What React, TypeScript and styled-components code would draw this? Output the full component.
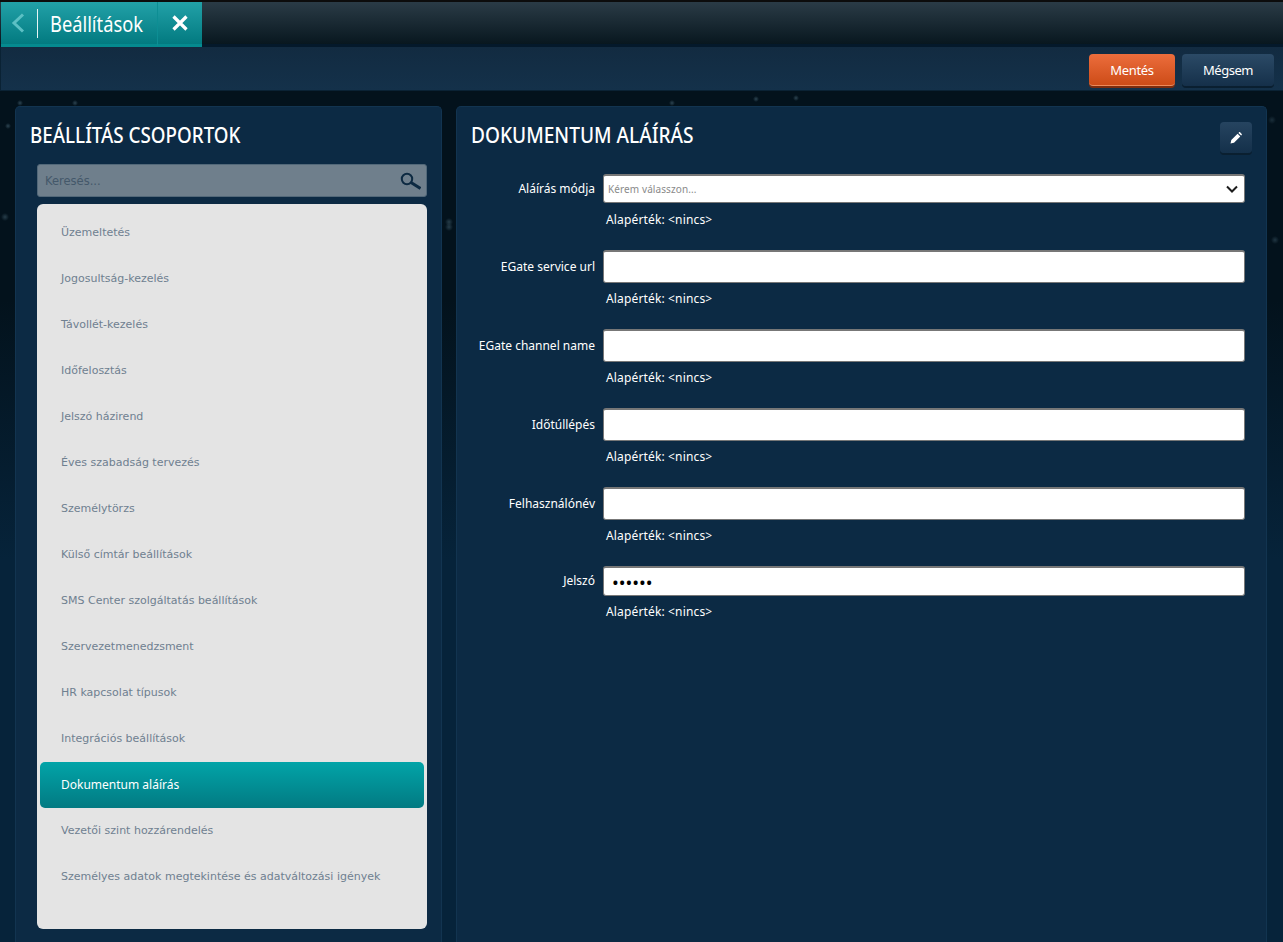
import React from 'react'
import styled, { createGlobalStyle } from 'styled-components'

const groups = [
  'Üzemeltetés',
  'Jogosultság-kezelés',
  'Távollét-kezelés',
  'Időfelosztás',
  'Jelszó házirend',
  'Éves szabadság tervezés',
  'Személytörzs',
  'Külső címtár beállítások',
  'SMS Center szolgáltatás beállítások',
  'Szervezetmenedzsment',
  'HR kapcsolat típusok',
  'Integrációs beállítások',
  'Dokumentum aláírás',
  'Vezetői szint hozzárendelés',
  'Személyes adatok megtekintése és adatváltozási igények',
]

const fields = [
  { label: 'Aláírás módja', kind: 'select' },
  { label: 'EGate service url', kind: 'text' },
  { label: 'EGate channel name', kind: 'text' },
  { label: 'Időtúllépés', kind: 'text' },
  { label: 'Felhasználónév', kind: 'text' },
  { label: 'Jelszó', kind: 'password' },
]

const fieldHeight: Record<string, number> = { select: 29, text: 33, password: 30 }

export default function App() {
  return (
    <>
      <GlobalStyle />
      <Page>
        <TopBar>
          <Tab>
            <BackButton>
              <svg width="16" height="22" viewBox="0 0 16 22">
                <path d="M13 2.5 4 11l9 8.5" fill="none" stroke="#5cc0c4" strokeWidth="3" />
              </svg>
            </BackButton>
            <TabTitle>Beállítások</TabTitle>
          </Tab>
          <CloseTab>
            <svg width="18" height="18" viewBox="0 0 18 18">
              <path d="M2.5 2.5l13 13M15.5 2.5l-13 13" stroke="#fff" strokeWidth="3.2" />
            </svg>
          </CloseTab>
        </TopBar>
        <ActionBar>
          <SaveButton>Mentés</SaveButton>
          <CancelButton>Mégsem</CancelButton>
        </ActionBar>
        <Content>
          <LeftPanel>
            <PanelTitle $offset>BEÁLLÍTÁS CSOPORTOK</PanelTitle>
            <SearchBox>
              <SearchText>Keresés...</SearchText>
              <svg width="21" height="18" viewBox="0 0 21 18">
                <circle cx="7" cy="7" r="5.2" fill="none" stroke="#0d2a42" strokeWidth="2" />
                <path d="M11 10.5l9.5 6" stroke="#0d2a42" strokeWidth="3" />
              </svg>
            </SearchBox>
            <GroupList>
              {groups.map((g) => (
                <GroupItem key={g} $active={g === 'Dokumentum aláírás'}>
                  {g}
                </GroupItem>
              ))}
            </GroupList>
          </LeftPanel>
          <RightPanel>
            <RightHead>
              <PanelTitle>DOKUMENTUM ALÁÍRÁS</PanelTitle>
              <EditButton>
                <svg width="12" height="12" viewBox="0 0 12 12">
                  <path d="M0.5 11.5 1.3 8 7.6 1.7l2.7 2.7L4 10.7zM8.4 0.9l.7-.6c.3-.3.7-.3 1 0l1.6 1.6c.3.3.3.7 0 1l-.6.7z" fill="#fff" />
                </svg>
              </EditButton>
            </RightHead>
            <Form>
              {fields.map((f) => (
                <FieldRow key={f.label}>
                  <FieldLabel $height={fieldHeight[f.kind]}>{f.label}</FieldLabel>
                  <FieldBody>
                    {f.kind === 'select' ? (
                      <SelectBox>
                        <Placeholder>Kérem válasszon...</Placeholder>
                        <svg width="12" height="8" viewBox="0 0 12 8">
                          <path d="M1 1.5 6 6.5l5-5" fill="none" stroke="#1c1c1c" strokeWidth="2" />
                        </svg>
                      </SelectBox>
                    ) : (
                      <InputBox $height={fieldHeight[f.kind]}>{f.kind === 'password' ? '••••••' : ''}</InputBox>
                    )}
                    <Hint $gap={f.kind === 'select' ? 7 : 6}>Alapérték: &lt;nincs&gt;</Hint>
                  </FieldBody>
                </FieldRow>
              ))}
            </Form>
          </RightPanel>
        </Content>
      </Page>
    </>
  )
}

const GlobalStyle = createGlobalStyle`
  html, body {
    margin: 0;
    height: 100%;
    overflow: hidden;
    background: #04141f;
  }
  * {
    box-sizing: border-box;
  }
`

const speck = (x: number, y: number, r = 3, a = 0.35) =>
  `radial-gradient(circle ${r}px at ${x}px ${y}px, rgba(120, 160, 180, ${a}), transparent)`

const Page = styled.div`
  width: 1283px;
  height: 942px;
  display: flex;
  flex-direction: column;
  overflow: hidden;
  font-family: 'Noto Sans', 'Open Sans', sans-serif;
  color: #fff;
  background-color: #04141f;
  background-image:
    ${speck(20, 103)}, ${speck(75, 103)}, ${speck(672, 103)}, ${speck(756, 99)}, ${speck(796, 98)},
    ${speck(8, 126)}, ${speck(5, 217, 4, 0.3)}, ${speck(449, 222, 4, 0.3)}, ${speck(449, 227, 4, 0.3)},
    ${speck(1275, 240, 4, 0.25)}, ${speck(1272, 120, 4, 0.2)},
    linear-gradient(#03121c 0, #03121c 300px, #06233a 560px, #06233a 100%);
`

const TopBar = styled.div`
  height: 47px;
  flex: none;
  display: flex;
  align-items: flex-start;
  padding: 2px 0 0 1px;
  background: linear-gradient(#2c3d48, #08171f);
  border-bottom: 3px solid #04192b;
  box-shadow: inset 0 2px 0 #0c0c0c;
`

const Tab = styled.div`
  width: 156px;
  height: 45px;
  flex: none;
  display: flex;
  align-items: center;
  background: linear-gradient(#22a1a8, #027a80);
  border-bottom: 3px solid #058a8f;
`

const BackButton = styled.div`
  width: 37px;
  height: 29px;
  flex: none;
  display: flex;
  align-items: center;
  padding-left: 9px;
  border-right: 1px solid #e6f5f5;
`

const TabTitle = styled.span`
  display: inline-block;
  margin: 2px 0 0 12px;
  font-size: 21px;
  white-space: nowrap;
  color: #fff;
  transform: scaleX(0.87);
  transform-origin: left center;
`

const CloseTab = styled.div`
  width: 45px;
  height: 45px;
  flex: none;
  display: flex;
  align-items: center;
  justify-content: center;
  background: linear-gradient(#22a1a8, #027a80);
  border-bottom: 3px solid #058a8f;
  border-left: 1px solid #0d8e94;
`

const ActionBar = styled.div`
  height: 44px;
  flex: none;
  display: flex;
  justify-content: flex-end;
  align-items: flex-start;
  gap: 7px;
  padding: 7px 9px 0 0;
  background: linear-gradient(#122b41, #14314a);
  border-bottom: 1px solid #0a2234;
  border-left: 1px solid #0a2234;
`

const SaveButton = styled.div`
  width: 86px;
  height: 32px;
  display: flex;
  align-items: center;
  justify-content: center;
  font-size: 13px;
  letter-spacing: -0.3px;
  border-radius: 4px;
  border-bottom: 1px solid #f08a5a;
  background: linear-gradient(#ec6d3c, #cd4c18);
  box-shadow: 0 2px 0 #7c2c0e;
`

const CancelButton = styled.div`
  width: 92px;
  height: 32px;
  display: flex;
  align-items: center;
  justify-content: center;
  font-size: 13px;
  letter-spacing: -0.5px;
  border-radius: 4px;
  background: linear-gradient(#2b4a66, #15304a);
  box-shadow: 0 2px 0 #0a1f30;
`

const Content = styled.div`
  flex: 1;
  display: flex;
  gap: 14px;
  padding: 15px 16px 0 15px;
  min-height: 0;
`

const LeftPanel = styled.div`
  width: 427px;
  flex: none;
  height: 860px;
  display: flex;
  flex-direction: column;
  padding: 0 14px 0 21px;
  background: #0c2a44;
  border-radius: 5px 5px 0 0;
  border: 1px solid #123450;
  border-bottom: none;
`

const PanelTitle = styled.h2<{ $offset?: boolean }>`
  margin: ${(p) => (p.$offset ? '13px 0 0 -7px' : '0')};
  height: 30px;
  line-height: 30px;
  flex: none;
  font-size: 21px;
  font-weight: 500;
  color: #fff;
  white-space: nowrap;
  transform: scaleX(${(p) => (p.$offset ? 0.895 : 0.91)});
  transform-origin: left center;
`

const SearchBox = styled.div`
  height: 33px;
  margin-top: 14px;
  flex: none;
  display: flex;
  align-items: center;
  justify-content: space-between;
  padding: 0 5px 0 7px;
  background: #6f7f8c;
  border: 1px solid #526879;
  border-radius: 3px;
`

const SearchText = styled.span`
  font-family: 'DejaVu Sans', sans-serif;
  font-size: 11.5px;
  color: #44586a;
`

const GroupList = styled.div`
  height: 725px;
  flex: none;
  margin-top: 7px;
  padding: 5px 3px 0;
  background: #e4e4e4;
  border-radius: 6px;
`

const GroupItem = styled.div<{ $active?: boolean }>`
  height: 46px;
  display: flex;
  align-items: center;
  padding-left: 21px;
  padding-bottom: ${(p) => (p.$active ? '2px' : '0')};
  font-family: ${(p) => (p.$active ? "'Noto Sans'" : "'DejaVu Sans'")}, sans-serif;
  font-size: ${(p) => (p.$active ? '12px' : '11px')};
  color: ${(p) => (p.$active ? '#fff' : '#6f8090')};
  border-radius: 5px;
  background: ${(p) => (p.$active ? 'linear-gradient(#02a4a8, #027a82)' : 'transparent')};
  margin: ${(p) => (p.$active ? '1px 0 -1px' : '0')};
`

const RightPanel = styled.div`
  width: 811px;
  flex: none;
  height: 860px;
  padding: 13px 14px 0 14px;
  background: #0c2a44;
  border-radius: 5px 5px 0 0;
  border: 1px solid #123450;
  border-bottom: none;
`

const RightHead = styled.div`
  display: flex;
  justify-content: space-between;
  align-items: flex-start;
  height: 54px;
`

const EditButton = styled.div`
  width: 32px;
  height: 31px;
  margin-top: 2px;
  display: flex;
  align-items: center;
  justify-content: center;
  border-radius: 4px;
  background: linear-gradient(#264460, #14304a);
  box-shadow: 0 2px 0 #0a1f30;
`

const Form = styled.div`
  display: flex;
  flex-direction: column;
  padding-right: 7px;
`

const FieldRow = styled.div`
  display: flex;
  gap: 8px;
  align-items: flex-start;
  margin-bottom: 21px;
`

const FieldLabel = styled.div<{ $height: number }>`
  width: 124px;
  flex: none;
  text-align: right;
  font-size: 12px;
  line-height: ${(p) => p.$height}px;
  color: #fff;
  white-space: nowrap;
`

const FieldBody = styled.div`
  flex: 1;
`

const SelectBox = styled.div`
  height: 29px;
  display: flex;
  align-items: center;
  justify-content: space-between;
  padding: 0 6px 0 4px;
  background: #fff;
  border: 1px solid #777;
  border-top-width: 2px;
  border-radius: 3px;
`

const Placeholder = styled.span`
  font-size: 10px;
  letter-spacing: 0.1px;
  color: #8a8a8a;
`

const InputBox = styled.div<{ $height: number }>`
  height: ${(p) => p.$height}px;
  display: flex;
  align-items: center;
  padding-left: 8px;
  font-size: 18px;
  color: #000;
  background: #fff;
  border: 1px solid #777;
  border-top-width: 2px;
  border-radius: 3px;
`

const Hint = styled.div<{ $gap: number }>`
  margin-top: ${(p) => p.$gap}px;
  padding-left: 3px;
  height: 19px;
  font-size: 12px;
  letter-spacing: 0.15px;
  line-height: 19px;
  color: #fff;
`
